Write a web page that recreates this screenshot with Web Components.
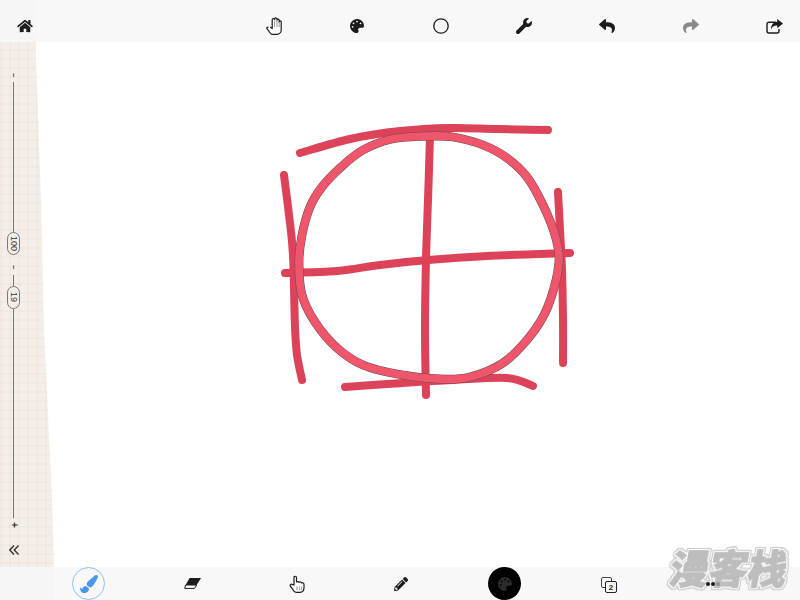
<!DOCTYPE html>
<html>
<head>
<meta charset="utf-8">
<style>
  html, body { margin: 0; height: 100%; background: #fff; font-family: "Liberation Sans", sans-serif; }
</style>
</head>
<body>
<paint-app>
  <tool-bar slot="top" kind="top">
    <bar-icon name="home" w="16" h="14"></bar-icon>
    <bar-icon name="hand" w="16" h="18" class="push"></bar-icon>
    <bar-icon name="palette" w="14" h="14"></bar-icon>
    <bar-icon name="circle" w="16" h="16"></bar-icon>
    <bar-icon name="wrench" w="16" h="16"></bar-icon>
    <bar-icon name="undo" w="18" h="16"></bar-icon>
    <bar-icon name="redo" w="18" h="16" color="#8a8a8a"></bar-icon>
    <bar-icon name="share" w="17" h="15"></bar-icon>
  </tool-bar>
  <side-rail>
    <span slot="minus">–</span>
    <span slot="size">100</span>
    <span slot="dash">–</span>
    <span slot="opacity">19</span>
    <span slot="plus">+</span>
  </side-rail>
  <ink-canvas></ink-canvas>
  <tool-bar slot="bottom" kind="bottom">
    <brush-button></brush-button>
    <bar-icon name="eraser" w="17" h="11"></bar-icon>
    <bar-icon name="pointer" w="16" h="18"></bar-icon>
    <bar-icon name="pencil" w="14" h="14"></bar-icon>
    <color-button></color-button>
    <page-count>2</page-count>
    <more-dots></more-dots>
  </tool-bar>
  <ink-watermark>漫客栈</ink-watermark>
</paint-app>

<script>
const ICONS = {
  home: ['0 0 576 512', '<path d="M280.37 148.26L96 300.11V464a16 16 0 0 0 16 16l112.06-.29a16 16 0 0 0 15.92-16V368a16 16 0 0 1 16-16h64a16 16 0 0 1 16 16v95.64a16 16 0 0 0 16 16.05L464 480a16 16 0 0 0 16-16V300L295.67 148.26a12.19 12.19 0 0 0-15.3 0zM571.6 251.47L488 182.56V44.05a12 12 0 0 0-12-12h-56a12 12 0 0 0-12 12v72.61L318.47 43a48 48 0 0 0-61 0L4.34 251.47a12 12 0 0 0-1.6 16.9l25.5 31A12 12 0 0 0 45.15 301l235.22-193.74a12.19 12.19 0 0 1 15.3 0L530.9 301a12 12 0 0 0 16.9-1.6l25.5-31a12 12 0 0 0-1.7-16.93z"/>'],
  palette: ['0 0 512 512', '<path d="M204.3 5C104.9 24.4 24.8 104.3 5.2 203.4c-37 187 131.7 326.4 258.8 306.7 41.2-6.4 61.4-54.6 42.5-91.7-23.1-45.4 9.9-98.4 60.9-98.4h79.7c35.8 0 64.8-29.6 64.9-65.3C511.5 97.1 368.1-26.9 204.3 5zM96 320c-17.7 0-32-14.3-32-32s14.3-32 32-32 32 14.3 32 32-14.3 32-32 32zm32-128c-17.7 0-32-14.3-32-32s14.3-32 32-32 32 14.3 32 32-14.3 32-32 32zm128-64c-17.7 0-32-14.3-32-32s14.3-32 32-32 32 14.3 32 32-14.3 32-32 32zm128 64c-17.7 0-32-14.3-32-32s14.3-32 32-32 32 14.3 32 32-14.3 32-32 32z"/>'],
  circle: ['0 0 16 16', '<circle cx="8" cy="8" r="7.2" fill="none" stroke="currentColor" stroke-width="1.3"/>'],
  wrench: ['0 0 512 512', '<path d="M507.73 109.1c-2.24-9.03-13.54-12.09-20.12-5.51l-74.36 74.36-67.88-11.31-11.31-67.88 74.36-74.36c6.62-6.62 3.43-17.9-5.66-20.16-47.38-11.74-99.55.91-136.58 37.93-39.64 39.64-50.55 97.1-34.05 147.2L18.74 402.76c-24.99 24.99-24.99 65.51 0 90.5 24.99 24.99 65.51 24.99 90.5 0l213.21-213.21c50.12 16.71 107.47 5.68 147.37-34.22 37.07-37.07 49.7-89.32 37.91-136.73z"/>'],
  undo: ['0 0 512 512', '<path d="M8.309 189.836L184.313 37.851C199.719 24.546 224 35.347 224 56.015v80.052c160.629 1.839 288 34.032 288 186.258 0 61.441-39.581 122.309-83.333 154.132-13.653 9.931-33.111-2.533-28.077-18.631 45.344-145.012-21.507-183.51-176.59-185.742V360c0 20.7-24.3 31.453-39.687 18.164l-176.004-152c-11.071-9.562-11.086-26.753 0-36.328z"/>'],
  redo: ['0 0 512 512', '<path d="M503.691 189.836L327.687 37.851C312.281 24.546 288 35.347 288 56.015v80.053C127.371 137.907 0 170.1 0 322.326c0 61.441 39.581 122.309 83.333 154.132 13.654 9.931 33.112-2.533 28.077-18.631C66.066 312.814 132.917 274.316 288 272.085V360c0 20.7 24.3 31.453 39.687 18.164l176.004-152c11.071-9.562 11.086-26.753 0-36.328z"/>'],
  share: ['0 0 17 15', '<path d="M10 3.2H3a2 2 0 0 0-2 2V12a2 2 0 0 0 2 2h8a2 2 0 0 0 2-2V10" fill="none" stroke="currentColor" stroke-width="1.4"/><path d="M11.2 0 L17 4.6 11.2 9.2V6.6C8 6.6 6 7.6 5.2 11 4.6 6.4 7 3.2 11.2 2.8Z"/>'],
  hand: ['0 0 16 18', '<path d="M2.4 10.6C1.4 9.6.3 10.6 1 11.7L4.2 16C4.8 16.8 5.5 17.3 6.5 17.3H11C13.3 17.3 15.2 15.6 15.2 13.2V5C15.2 3.6 13.2 3.6 13.2 5V3.2C13.2 1.8 11 1.8 11 3.2V2C11 .5 8.6 .5 8.6 2V2.6C8.6 1.2 6.2 1.2 6.2 2.8V11.6L4 9.9" fill="#fff" stroke="currentColor" stroke-width="1.2" stroke-linejoin="round"/><path d="M8.6 3.5V10M11 3.5V10M13.2 5V10" stroke="#9a9a9a" fill="none"/>'],
  pointer: ['0 0 16 18', '<path d="M5 10V2.5C5 .8 7.5 .8 7.5 2.5V7C8.5 6.2 9.8 6.5 10 7.3 11 6.6 12.2 7 12.4 7.9 13.4 7.4 15 8 15 9.5V12.5C15 15.5 13.5 17.3 11 17.3H7.5C6.3 17.3 5.5 16.7 4.8 15.8L1.4 11.2C.5 9.8 2.3 8.5 3.4 9.6Z" fill="#fff" stroke="currentColor" stroke-width="1.2" stroke-linejoin="round"/><path d="M8 11.5V15M10.3 11.5V15M12.6 11.5V15" stroke="#9a9a9a" fill="none"/>'],
  eraser: ['0 0 17 11', '<path d="M5.6 0H17L12.6 7H1.6Z"/><path d="M1.6 7H12.6L10.6 10.4H.7Z" fill="#fff" stroke="currentColor" stroke-width="1"/>'],
  pencil: ['0 0 512 512', '<path d="M497.9 142.1l-46.1 46.1c-4.7 4.7-12.3 4.7-17 0l-111-111c-4.7-4.7-4.7-12.3 0-17l46.1-46.1c18.7-18.7 49.1-18.7 67.9 0l60.1 60.1c18.8 18.7 18.8 49.1 0 67.9zM284.2 99.8L21.6 362.4.4 483.9c-2.9 16.4 11.4 30.6 27.8 27.8l121.5-21.3 262.6-262.6c4.7-4.7 4.7-12.3 0-17l-111-111c-4.8-4.7-12.4-4.7-17.1 0zM124.1 339.9c-5.5-5.5-5.5-14.3 0-19.8l154-154c5.5-5.5 14.3-5.5 19.8 0s5.5 14.3 0 19.8l-154 154c-5.5 5.5-14.3 5.5-19.8 0zM88 424h48v36.3l-64.5 11.3-31.1-31.1L51.7 376H88v48z"/>'],
  brush: ['0 0 512 512', '<path d="M167.02 309.34c-40.12 2.58-76.53 17.86-97.19 72.3-2.35 6.21-8 9.98-14.59 9.98-11.11 0-45.46-27.67-55.25-34.35C0 439.62 37.93 512 128 512c75.86 0 128-43.77 128-120.19 0-3.11-.65-6.08-.97-9.13l-88.01-73.34zM457.89 0c-15.16 0-29.37 6.71-40.21 16.45C213.27 199.05 192 203.34 192 257.09c0 13.7 3.25 26.76 8.73 38.7l63.82 53.18c7.21 1.8 14.64 3.03 22.39 3.03 62.11 0 98.11-45.47 211.16-256.46 7.38-14.35 13.9-29.85 13.9-45.99C512 20.64 486 0 457.89 0z"/>']
};

function iconSvg(name, w, h) {
  const [box, body] = ICONS[name];
  return `<svg width="${w}" height="${h}" viewBox="${box}" fill="currentColor">${body}</svg>`;
}

class PaintApp extends HTMLElement {
  constructor() {
    super();
    this.attachShadow({ mode: 'open' }).innerHTML = `
      <style>
        :host { display: grid; grid-template-rows: 42px 1fr 33px; height: 100vh; position: relative; z-index: 0; overflow: hidden; background: #fff; }
      </style>
      <slot name="top"></slot>
      <slot></slot>
      <slot name="bottom"></slot>`;
  }
}

class ToolBar extends HTMLElement {
  constructor() {
    super();
    this.attachShadow({ mode: 'open' }).innerHTML = `
      <style>
        :host { display: flex; align-items: center; background: rgba(247,247,247,.88); color: #1c1c1c; }
        :host([kind=top]) { gap: 50.33px; padding: 13px 9.5px 3px 8.5px; justify-content: flex-end; }
        :host([kind=bottom]) { gap: 71px; padding-left: 72px; }
        ::slotted(bar-icon[name=home]) { margin-right: auto; }
      </style>
      <slot></slot>`;
  }
}

class BarIcon extends HTMLElement {
  connectedCallback() {
    if (this.shadowRoot) return;
    const w = this.getAttribute('w'), h = this.getAttribute('h');
    const color = this.getAttribute('color') || 'inherit';
    this.attachShadow({ mode: 'open' }).innerHTML = `
      <style>
        :host { display: flex; align-items: center; justify-content: center; width: 33px; height: 26px; flex: none; color: ${color}; }
        svg { display: block; }
      </style>
      ${iconSvg(this.getAttribute('name'), w, h)}`;
  }
}

class BrushButton extends HTMLElement {
  constructor() {
    super();
    this.attachShadow({ mode: 'open' }).innerHTML = `
      <style>
        :host { display: flex; align-items: center; justify-content: center; width: 33px; height: 33px; box-sizing: border-box; flex: none; border-radius: 50%; border: 1px solid #8fc0f3; color: #4a98ee; }
        svg { display: block; }
      </style>
      ${iconSvg('brush', 18, 18)}`;
  }
}

class ColorButton extends HTMLElement {
  constructor() {
    super();
    this.attachShadow({ mode: 'open' }).innerHTML = `
      <style>
        :host { display: flex; align-items: center; justify-content: center; width: 33px; height: 33px; flex: none; border-radius: 50%; background: #000; color: #2b2b2b; }
        svg { display: block; }
      </style>
      ${iconSvg('palette', 14, 14)}`;
  }
}

class PageCount extends HTMLElement {
  constructor() {
    super();
    this.attachShadow({ mode: 'open' }).innerHTML = `
      <style>
        :host { display: block; width: 33px; height: 17px; flex: none; position: relative; font: bold 8px "Liberation Sans", sans-serif; color: #1c1c1c; }
        .back { position: absolute; left: 9px; top: 2px; width: 9px; height: 9px; border: 1px solid #444; border-radius: 2px; }
        .front { display: flex; align-items: center; justify-content: center; box-sizing: border-box; position: absolute; left: 13px; top: 6px; width: 12px; height: 12px; border: 1.3px solid #222; border-radius: 2px; background: #f7f7f7; }
      </style>
      <div class="back"></div>
      <div class="front"><slot></slot></div>`;
  }
}

class MoreDots extends HTMLElement {
  constructor() {
    super();
    this.attachShadow({ mode: 'open' }).innerHTML = `
      <style>
        :host { display: flex; align-items: center; justify-content: center; gap: 1px; width: 33px; height: 33px; flex: none; position: relative; z-index: 4; }
        i { display: block; width: 4px; height: 4px; border-radius: 50%; background: #1c1c1c; }
        i:last-child { background: #8d8d8d; }
      </style>
      <i></i><i></i><i></i>`;
  }
}

class SideRail extends HTMLElement {
  constructor() {
    super();
    this.attachShadow({ mode: 'open' }).innerHTML = `
      <style>
        :host {
          display: flex; flex-direction: column; align-items: center; box-sizing: border-box;
          position: absolute; left: 0; top: 0; width: 54px; height: 600px; z-index: -1;
          padding: 72px 27px 0 0;
          clip-path: polygon(0 0, 36px 0, 36px 60px, 41px 200px, 44px 330px, 52px 500px, 54px 567px, 54px 600px, 0 600px);
          background-color: #f4eee9;
          background-image:
            repeating-linear-gradient(90deg, rgba(226,196,186,.13) 0 2px, transparent 2px 9px),
            repeating-linear-gradient(0deg, rgba(226,196,186,.13) 0 2px, transparent 2px 9px);
          font: 10px "Liberation Sans", sans-serif; color: #333;
        }
        .mark { display: flex; align-items: center; justify-content: center; height: 6px; line-height: 6px; writing-mode: vertical-rl; font-weight: bold; font-size: 8px; }
        .line { width: 1px; background: #777; flex: none; }
        .pill { display: flex; align-items: center; justify-content: center; box-sizing: border-box; width: 13px; height: 23px; flex: none; border: 1px solid #777; border-radius: 7px; writing-mode: vertical-rl; font-size: 9px; background: #f4eee9; }
        svg { display: block; margin-top: 17px; }
      </style>
      <div class="mark"><slot name="minus"></slot></div>
      <div class="line" style="height:150px;margin-top:4px"></div>
      <div class="pill"><slot name="size"></slot></div>
      <div class="mark" style="margin-top:9px"><slot name="dash"></slot></div>
      <div class="line" style="height:11px;margin-top:5px"></div>
      <div class="pill"><slot name="opacity"></slot></div>
      <div class="line" style="height:209px"></div>
      <div class="mark" style="margin-top:4px;font-size:10px"><slot name="plus"></slot></div>
      <svg width="10" height="10" viewBox="0 0 10 10" fill="none" stroke="#333" stroke-width="1.4">
        <path d="M5 .5L.8 5 5 9.5M9.5 .5L5.3 5 9.5 9.5"/>
      </svg>`;
  }
}

// points read off the reference, in page coordinates
const STROKES = [
  [[300,153],[350,139],[400,131],[450,128],[497,129],[548,130]],
  [[284,175],[289,215],[293,255],[295,327],[297,355],[302,380]],
  [[285,273],[337,271],[380,265],[428,260],[487,256],[570,253]],
  [[430,136],[428,200],[426,260],[425,330],[426,395]],
  [[558,192],[560,230],[562,270],[563,320],[563,363]],
  [[345,387],[403,383],[453,380],[507,378],[533,386]]
];
const CIRCLE = [
  [427,136],[392,139],[363,150],[340,168],[322,187],[310,207],[302,235],[299,262],[302,295],
  [315,322],[337,348],[363,365],[397,374],[440,379],[470,377],[503,363],[527,340],
  [544,315],[554,288],[559,260],[555,235],[543,205],[527,177],[507,158],[483,145],[453,137],[427,136]
];

function smoothPath(pts) {
  let d = `M${pts[0][0]} ${pts[0][1]}`;
  for (let i = 0; i < pts.length - 1; i++) {
    const p0 = pts[i - 1] || pts[i], p1 = pts[i], p2 = pts[i + 1], p3 = pts[i + 2] || p2;
    const c1 = [p1[0] + (p2[0] - p0[0]) / 6, p1[1] + (p2[1] - p0[1]) / 6];
    const c2 = [p2[0] - (p3[0] - p1[0]) / 6, p2[1] - (p3[1] - p1[1]) / 6];
    d += `C${c1[0].toFixed(1)} ${c1[1].toFixed(1)} ${c2[0].toFixed(1)} ${c2[1].toFixed(1)} ${p2[0]} ${p2[1]}`;
  }
  return d;
}

class InkCanvas extends HTMLElement {
  constructor() {
    super();
    const lines = STROKES.map(s => `<path d="${smoothPath(s)}"/>`).join('');
    const ring = smoothPath(CIRCLE);
    this.attachShadow({ mode: 'open' }).innerHTML = `
      <style>
        :host { display: block; overflow: hidden; }
        svg { display: block; filter: blur(.4px); }
      </style>
      <svg width="800" height="525" viewBox="0 42 800 525" fill="none" stroke-linecap="round" stroke-linejoin="round">
        <g stroke="#dc4359" stroke-width="8">${lines}</g>
        <path d="${ring}" stroke="#6e4a50" stroke-width="8.8"/>
        <path d="${ring}" stroke="#f0566b" stroke-width="7.8"/>
      </svg>`;
  }
}

class InkWatermark extends HTMLElement {
  constructor() {
    super();
    this.attachShadow({ mode: 'open' }).innerHTML = `
      <style>
        :host {
          display: block; position: absolute; left: 671px; top: 542px; z-index: 3; white-space: nowrap;
          font: 900 39px/48px "Noto Sans CJK SC", "Noto Sans", sans-serif; color: #bdbdbd;
          -webkit-text-stroke: 1px #bdbdbd;
          transform: skewX(-10deg);
          filter: drop-shadow(1px 0 0 #fff) drop-shadow(-1px 0 0 #fff) drop-shadow(0 1px 0 #fff) drop-shadow(0 -1px 0 #fff)
                  drop-shadow(1px 0 0 #cacaca) drop-shadow(-1px 0 0 #cacaca) drop-shadow(0 1px 0 #cacaca) drop-shadow(0 -1px 0 #cacaca);
        }
      </style>
      <slot></slot>`;
  }
}

customElements.define('paint-app', PaintApp);
customElements.define('tool-bar', ToolBar);
customElements.define('bar-icon', BarIcon);
customElements.define('brush-button', BrushButton);
customElements.define('color-button', ColorButton);
customElements.define('page-count', PageCount);
customElements.define('more-dots', MoreDots);
customElements.define('side-rail', SideRail);
customElements.define('ink-canvas', InkCanvas);
customElements.define('ink-watermark', InkWatermark);
</script>
</body>
</html>
